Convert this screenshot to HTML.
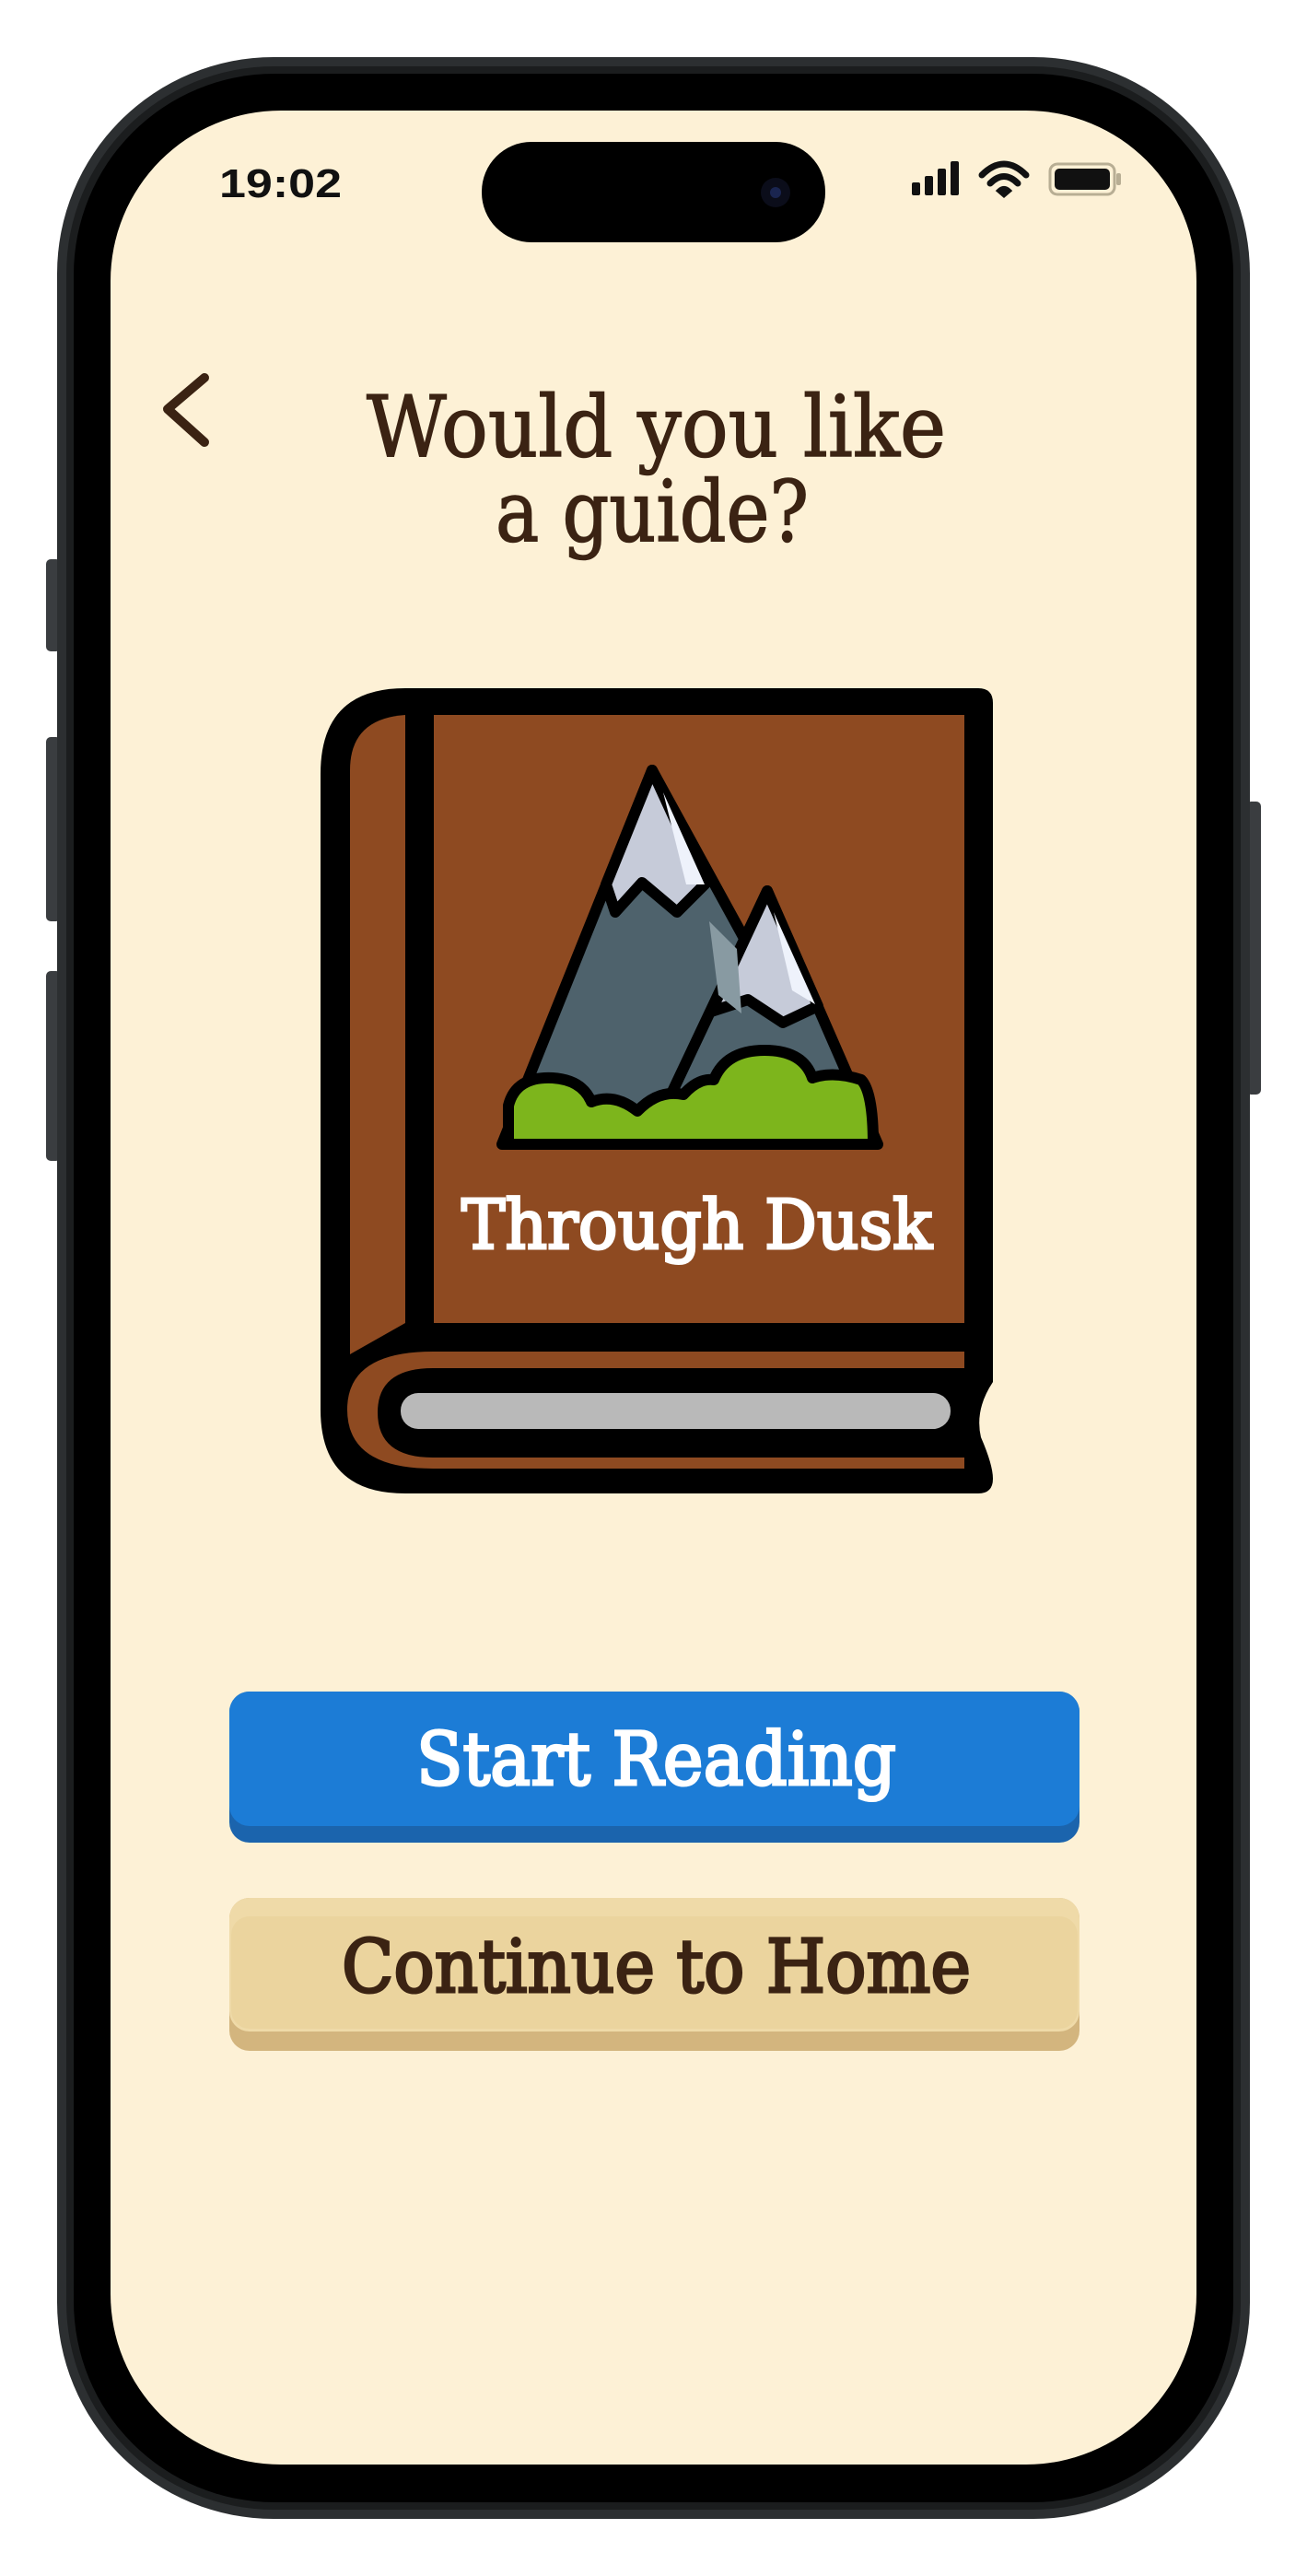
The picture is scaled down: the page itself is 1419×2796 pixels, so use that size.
<!DOCTYPE html>
<html><head><meta charset="utf-8"><style>
html,body{margin:0;padding:0;background:#fff;}
svg{display:block}
</style></head><body>
<svg width="1419" height="2796" viewBox="0 0 1419 2796" xmlns="http://www.w3.org/2000/svg">
<rect width="1419" height="2796" fill="#fff"/>
<rect x="50" y="607" width="16" height="100" rx="5" fill="#3a3d40"/>
<rect x="50" y="800" width="16" height="200" rx="5" fill="#3a3d40"/>
<rect x="50" y="1054" width="16" height="206" rx="5" fill="#3a3d40"/>
<rect x="1353" y="870" width="16" height="318" rx="5" fill="#3a3d40"/>
<rect x="62" y="62" width="1295" height="2672" rx="235" fill="#2c2f31"/>
<rect x="72" y="72" width="1275" height="2652" rx="225" fill="#1b1d1e"/>
<rect x="80" y="80" width="1259" height="2636" rx="218" fill="#000"/>
<rect x="120" y="120" width="1179" height="2555" rx="185" fill="#fdf1d6"/>
<rect x="523" y="154" width="373" height="109" rx="54" fill="#000"/>
<circle cx="842" cy="209" r="16" fill="#0b0d1a"/>
<circle cx="842" cy="209" r="6" fill="#1a2550"/>
<text x="238" y="214" font-family="Liberation Sans, sans-serif" font-weight="bold" font-size="44" fill="#111" textLength="133" lengthAdjust="spacingAndGlyphs">19:02</text>
<rect x="990" y="198" width="9" height="14" rx="2" fill="#111"/>
<rect x="1004" y="191" width="9" height="21" rx="2" fill="#111"/>
<rect x="1018" y="183" width="9" height="29" rx="2" fill="#111"/>
<rect x="1032" y="175" width="9" height="37" rx="2" fill="#111"/>
<path d="M1066,190 Q1090,166 1114,190" stroke="#111" stroke-width="7" fill="none" stroke-linecap="round"/>
<path d="M1075,199 Q1090,184 1105,199" stroke="#111" stroke-width="7" fill="none" stroke-linecap="round"/>
<path d="M1083,207 L1090,213 L1097,207 Q1090,200 1083,207Z" fill="#111" stroke="#111" stroke-width="3"/>
<rect x="1140" y="178" width="70" height="33" rx="8" fill="none" stroke="#b8ae94" stroke-width="3"/>
<rect x="1145" y="183" width="60" height="23" rx="5" fill="#111"/>
<rect x="1212" y="188" width="5" height="13" rx="2" fill="#b8ae94"/>
<polyline points="222,410 182,444 222,480" fill="none" stroke="#3b2313" stroke-width="10" stroke-linecap="round" stroke-linejoin="round"/>
<text x="398" y="495" font-family="DejaVu Serif, Liberation Serif, serif" font-size="92" fill="#3b2313" stroke="#3b2313" stroke-width="1.5" textLength="629" lengthAdjust="spacingAndGlyphs">Would you like</text>
<text x="538" y="587" font-family="DejaVu Serif, Liberation Serif, serif" font-size="92" fill="#3b2313" stroke="#3b2313" stroke-width="1.5" textLength="340" lengthAdjust="spacingAndGlyphs">a guide?</text>
<path d="M440,747 L1062,747 Q1078,747 1078,763 L1078,1500 Q1058,1530 1065,1560 Q1078,1590 1078,1605 Q1078,1621 1062,1621 L440,1621 Q348,1621 348,1530 L348,840 Q348,747 440,747Z" fill="#000"/>
<path d="M440,776 L440,1436 L380,1470 L380,836 Q380,780 440,776Z" fill="#8e4a21"/>
<rect x="471" y="776" width="576" height="660" fill="#8e4a21"/>
<path d="M470,1467 L1047,1467 L1047,1594 L470,1594 Q377,1594 377,1530 Q377,1467 470,1467Z" fill="#8e4a21"/>
<path d="M470,1485 L1047,1485 L1047,1582 L470,1582 Q410,1582 410,1533 Q410,1485 470,1485Z" fill="#000"/>
<rect x="435" y="1512" width="597" height="39" rx="19" fill="#b9b9b9"/>
<g stroke="#000" stroke-width="12" stroke-linejoin="round" stroke-linecap="round">
<polygon points="545,1242 708,836 880,1150 880,1242" fill="#4e626c"/>
<polygon points="708,836 658,960 668,990 697,958 735,990 765,960" fill="#c6cbd9"/>
<polygon points="703,1242 833,967 953,1242" fill="#4e626c"/>
<polygon points="833,967 772,1098 812,1085 850,1110 888,1092" fill="#c6cbd9"/>
<path d="M552,1242 L552,1200 Q560,1168 600,1170 Q632,1172 642,1196 Q667,1186 692,1206 Q715,1182 742,1188 Q758,1170 775,1172 Q788,1140 830,1140 Q872,1140 882,1170 Q905,1162 935,1172 Q948,1185 948,1242 Z" fill="#7db51c"/>
</g>
<polygon points="720,860 745,960 765,960" fill="#eef2fb"/>
<polygon points="840,990 860,1075 885,1090" fill="#eef2fb"/>
<polygon points="770,1000 800,1030 805,1100 780,1080" fill="#889aa2"/>
<text x="501" y="1355" font-family="DejaVu Serif, Liberation Serif, serif" font-size="74" fill="#fff" stroke="#fff" stroke-width="3" textLength="511" lengthAdjust="spacingAndGlyphs">Through Dusk</text>
<rect x="249" y="1836" width="923" height="164" rx="22" fill="#1b64ad"/>
<rect x="249" y="1836" width="923" height="146" rx="22" fill="#1c7cd6"/>
<text x="452" y="1937" font-family="DejaVu Serif, Liberation Serif, serif" font-size="80" fill="#fff" stroke="#fff" stroke-width="3" textLength="521" lengthAdjust="spacingAndGlyphs">Start Reading</text>
<rect x="249" y="2060" width="923" height="166" rx="22" fill="#d3b57e"/>
<rect x="249" y="2060" width="923" height="145" rx="22" fill="#efdaa8"/>
<rect x="251" y="2080" width="919" height="122" rx="20" fill="#ebd49e"/>
<text x="371" y="2162" font-family="DejaVu Serif, Liberation Serif, serif" font-size="80" fill="#3b2313" stroke="#3b2313" stroke-width="3" textLength="683" lengthAdjust="spacingAndGlyphs">Continue to Home</text>
</svg>
</body></html>
